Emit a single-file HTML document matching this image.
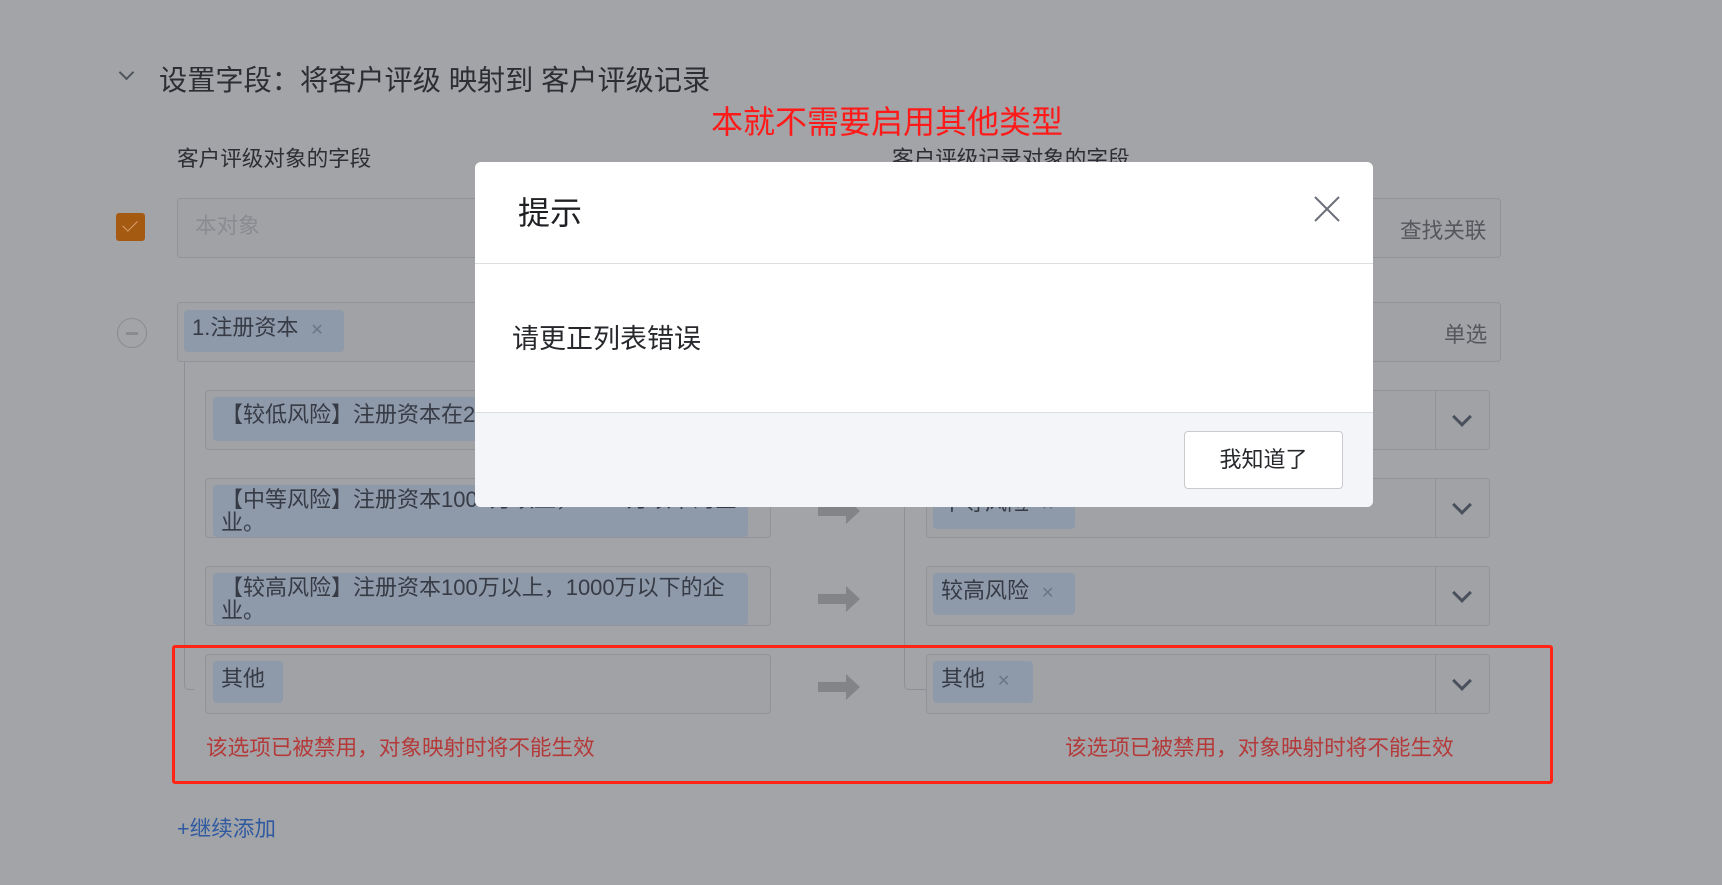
<!DOCTYPE html>
<html><head><meta charset="utf-8">
<style>
*{margin:0;padding:0;box-sizing:border-box}
body{width:1722px;height:885px;background:#a3a4a8;font-family:"Liberation Sans","Noto Sans CJK SC",sans-serif;position:relative;overflow:hidden;color:#2a2c30}
.a{position:absolute}
.box{position:absolute;border:1px solid #929398;border-radius:4px;background:#a1a2a6}
.tag{position:absolute;background:#8e99aa;border-radius:4px;color:#363b45;font-size:22px;line-height:26px;padding:5px 8px;white-space:nowrap}
.x{color:#6c7686;font-size:16px;margin-left:12px}
.chev{position:absolute;width:14px;height:14px;border-right:3px solid #4a505c;border-bottom:3px solid #4a505c;transform:rotate(45deg)}
.err{position:absolute;color:#b43a3a;font-size:21.6px;top:731px}
</style></head><body>
<div class="chev" style="left:121px;top:67px;width:11px;height:11px;border-width:2px;border-color:#50545c"></div>
<div class="a" style="left:159px;top:58px;font-size:28.2px;color:#2c2e33">设置字段：将客户评级 映射到 客户评级记录</div>
<div class="a" style="left:711px;top:97px;font-size:32px;color:#ff1a1a">本就不需要启用其他类型</div>
<div class="a" style="left:177px;top:142px;font-size:21.6px;color:#2c2e33">客户评级对象的字段</div>
<div class="a" style="left:892px;top:142px;font-size:21.6px;color:#2c2e33">客户评级记录对象的字段</div>

<div class="a" style="left:116px;top:213px;width:29px;height:28px;background:#a55a12;border-radius:3px"></div>
<div class="a" style="left:126px;top:217px;width:8px;height:14px;border-right:1.5px solid #d9a070;border-bottom:1.5px solid #d9a070;transform:rotate(45deg)"></div>
<div class="box" style="left:177px;top:198px;width:1324px;height:60px"></div>
<div class="a" style="left:195px;top:209px;font-size:21.6px;color:#8a8b90">本对象</div>
<div class="a" style="left:1400px;top:214px;font-size:21.6px;color:#55575c">查找关联</div>

<div class="a" style="left:117px;top:318px;width:30px;height:30px;border:1.5px solid #8a8b8f;border-radius:50%"></div>
<div class="a" style="left:126px;top:332px;width:12px;height:3px;background:#8a8b8f"></div>
<div class="box" style="left:177px;top:302px;width:1324px;height:60px"></div>
<div class="tag" style="left:184px;top:310px;width:160px;height:42px">1.注册资本<span class="x">✕</span></div>
<div class="a" style="left:1444px;top:318px;font-size:21.6px;color:#55575c">单选</div>

<div class="a" style="left:184px;top:362px;width:10px;height:328px;border-left:1px solid #8f9095;border-bottom:1px solid #8f9095;border-bottom-left-radius:5px"></div>
<div class="a" style="left:904px;top:362px;width:22px;height:328px;border-left:1px solid #8f9095;border-bottom:1px solid #8f9095;border-bottom-left-radius:5px"></div>

<!-- rows -->
<div class="box" style="left:205px;top:390px;width:566px;height:60px"></div>
<div class="tag" style="left:213px;top:397px;width:540px;height:44px">【较低风险】注册资本在2000万以上的企业。</div>
<div class="box" style="left:205px;top:478px;width:566px;height:60px"></div>
<div class="tag" style="left:213px;top:485px;width:535px;height:52px;padding-top:3px;line-height:23px">【中等风险】注册资本1000万以上，2000万以下的企<br>业。</div>
<div class="box" style="left:205px;top:566px;width:566px;height:60px"></div>
<div class="tag" style="left:213px;top:573px;width:535px;height:52px;padding-top:3px;line-height:23px">【较高风险】注册资本100万以上，1000万以下的企<br>业。</div>
<div class="box" style="left:205px;top:654px;width:566px;height:60px"></div>
<div class="tag" style="left:213px;top:661px;width:70px;height:42px">其他</div>

<svg class="a" style="left:816px;top:490px" width="46" height="220"><g fill="#838488">
<path d="M2 16h28v-8l14 13-14 13v-8H2z"/><path d="M2 104h28v-8l14 13-14 13v-8H2z"/><path d="M2 192h28v-8l14 13-14 13v-8H2z"/></g></svg>

<div class="box" style="left:926px;top:390px;width:564px;height:60px"></div>
<div class="box" style="left:926px;top:478px;width:564px;height:60px"></div>
<div class="tag" style="left:933px;top:485px;width:142px;height:44px">中等风险<span class="x">✕</span></div>
<div class="box" style="left:926px;top:566px;width:564px;height:60px"></div>
<div class="tag" style="left:933px;top:573px;width:142px;height:42px">较高风险<span class="x">✕</span></div>
<div class="box" style="left:926px;top:654px;width:564px;height:60px"></div>
<div class="tag" style="left:933px;top:661px;width:100px;height:42px">其他<span class="x">✕</span></div>
<div class="a" style="left:1435px;top:390px;width:1px;height:60px;background:#929398"></div>
<div class="a" style="left:1435px;top:478px;width:1px;height:60px;background:#929398"></div>
<div class="a" style="left:1435px;top:566px;width:1px;height:60px;background:#929398"></div>
<div class="a" style="left:1435px;top:654px;width:1px;height:60px;background:#929398"></div>
<div class="chev" style="left:1455px;top:410px"></div>
<div class="chev" style="left:1455px;top:498px"></div>
<div class="chev" style="left:1455px;top:586px"></div>
<div class="chev" style="left:1455px;top:674px"></div>

<div class="a" style="left:172px;top:645px;width:1381px;height:139px;border:3.5px solid #ff2414;border-radius:3px"></div>
<div class="err" style="left:206px">该选项已被禁用，对象映射时将不能生效</div>
<div class="err" style="left:1065px">该选项已被禁用，对象映射时将不能生效</div>
<div class="a" style="left:177px;top:812px;font-size:21.6px;color:#2f5aa0">+继续添加</div>

<!-- modal -->
<div class="a" style="left:475px;top:162px;width:898px;height:345px;background:#fff;border-radius:6px;overflow:hidden">
  <div class="a" style="left:43px;top:26px;font-size:32px;color:#1f2023">提示</div>
  <svg class="a" style="left:838px;top:33px" width="28" height="28"><path d="M2 2L26 26M26 2L2 26" stroke="#6b7079" stroke-width="2"/></svg>
  <div class="a" style="left:0;top:101px;width:898px;height:1px;background:#dcdde0"></div>
  <div class="a" style="left:37px;top:155px;font-size:27px;color:#26282c">请更正列表错误</div>
  <div class="a" style="left:0;top:250px;width:898px;height:95px;background:#f4f5f9;border-top:1px solid #dcdde0"></div>
  <div class="a" style="left:709px;top:269px;width:159px;height:58px;background:#fff;border:1px solid #c8cace;border-radius:4px;font-size:22px;line-height:56px;text-align:center;color:#26282c">我知道了</div>
</div>
</body></html>
